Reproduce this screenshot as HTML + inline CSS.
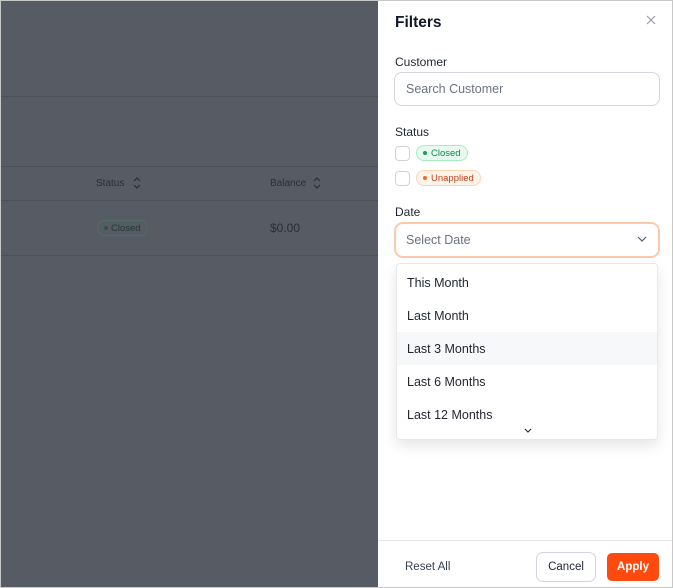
<!DOCTYPE html>
<html><head><style>
*{box-sizing:border-box;margin:0;padding:0}
body{width:673px;height:588px;overflow:hidden;font-family:"Liberation Sans",sans-serif;background:#fff;position:relative}
.frame{position:absolute;inset:0;border:1px solid #c8c8c8;z-index:10;pointer-events:none}
.ov{position:absolute;left:0;top:0;width:378px;height:588px;background:#575b63}
.ln{position:absolute;left:0;width:378px;height:1px;background:#4c5058}
.t{position:absolute;font-size:10px;color:#2a2e36}
.p{position:absolute;left:378px;top:0;width:295px;height:588px;background:#fff}
.a{position:absolute}
.lbl{font-size:12px;color:#1f2430}
.inp{border:1px solid #d3d6de;border-radius:8px;font-size:12.5px;color:#6b7280;padding-left:11px;display:flex;align-items:center}
.cb{width:15px;height:15px;border:1px solid #cfd3da;border-radius:4px}
.pill{height:16px;border-radius:8px;font-size:9.5px;display:flex;align-items:center;padding:0 6px}
.pill i{width:4px;height:4px;border-radius:2px;display:inline-block;margin-right:4px}
.it{position:absolute;left:0;width:262px;height:33px;font-size:12.5px;color:#1f2430;padding-left:10px;display:flex;align-items:center}
</style></head><body>
<div class="ov">
<div class="ln" style="top:96px"></div>
<div class="ln" style="top:166px"></div>
<div class="ln" style="top:200px"></div>
<div class="ln" style="top:255px"></div>
<div class="t" style="left:96px;top:178px">Status</div>
<svg class="a" style="left:132px;top:176px" width="10" height="14" viewBox="0 0 10 14"><path d="M2 5l3-3 3 3M2 9l3 3 3-3" fill="none" stroke="#2a2e36" stroke-width="1.2"/></svg>
<div class="t" style="left:270px;top:178px">Balance</div>
<svg class="a" style="left:312px;top:176px" width="10" height="14" viewBox="0 0 10 14"><path d="M2 5l3-3 3 3M2 9l3 3 3-3" fill="none" stroke="#2a2e36" stroke-width="1.2"/></svg>
<div class="a" style="left:97px;top:220px;width:51px;height:16px;border:1px solid #4f6f62;border-radius:8px;font-size:9.5px;color:#1f3a30;display:flex;align-items:center;padding-left:6px"><i style="width:4px;height:4px;border-radius:2px;background:#1f5a40;margin-right:3px;display:inline-block"></i>Closed</div>
<div class="t" style="left:270px;top:221px;font-size:12px">$0.00</div>
</div>
<div class="p">
<div class="a" style="left:17px;top:14px;font-size:15.5px;font-weight:bold;color:#111827">Filters</div>
<svg class="a" style="left:267px;top:14px" width="12" height="12" viewBox="0 0 12 12"><path d="M2 2l8 8M10 2l-8 8" stroke="#9aa0aa" stroke-width="1.2"/></svg>
<div class="a lbl" style="left:17px;top:55px">Customer</div>
<div class="a inp" style="left:16px;top:72px;width:266px;height:34px">Search Customer</div>
<div class="a lbl" style="left:17px;top:125px">Status</div>
<div class="a cb" style="left:17px;top:146px"></div>
<div class="a pill" style="left:38px;top:145px;background:#e8faf0;border:1px solid #a7ecc4;color:#0f8a4d"><i style="background:#14a05a"></i>Closed</div>
<div class="a cb" style="left:17px;top:171px"></div>
<div class="a pill" style="left:38px;top:170px;background:#fff3ea;border:1px solid #fbd5b5;color:#c0421b"><i style="background:#f26b2a"></i>Unapplied</div>
<div class="a lbl" style="left:17px;top:205px">Date</div>
<div class="a inp" style="left:16px;top:222px;width:266px;height:36px;border:2px solid #fdc9ad;border-radius:9px;padding-left:10px">Select Date</div>
<svg class="a" style="left:259px;top:236px" width="10" height="7" viewBox="0 0 10 7"><path d="M1 1l4 4 4-4" fill="none" stroke="#555b66" stroke-width="1.2"/></svg>
<div class="a" style="left:18px;top:263px;width:262px;height:177px;border:1px solid #e6e8ec;border-radius:4px;box-shadow:0 6px 14px rgba(0,0,0,.10);background:#fff;overflow:hidden">
<div class="it" style="top:2px">This Month</div>
<div class="it" style="top:35px">Last Month</div>
<div class="it" style="top:68px;background:#f7f8fa">Last 3 Months</div>
<div class="it" style="top:101px">Last 6 Months</div>
<div class="it" style="top:134px">Last 12 Months</div>
<svg class="a" style="left:127px;top:164px" width="8" height="6" viewBox="0 0 8 6"><path d="M1 1l3 3 3-3" fill="none" stroke="#333" stroke-width="1.2"/></svg>
</div>
<div class="a" style="left:0;top:540px;width:295px;height:1px;background:#e5e7eb"></div>
<div class="a" style="left:27px;top:561px;font-size:11.5px;color:#374151">Reset All</div>
<div class="a" style="left:158px;top:552px;width:60px;height:30px;border:1px solid #d1d5db;border-radius:7px;font-size:11.5px;color:#1f2430;display:flex;align-items:center;justify-content:center">Cancel</div>
<div class="a" style="left:229px;top:553px;width:52px;height:28px;background:#ff4a0f;border-radius:5px;font-size:11.5px;font-weight:bold;color:#fff;display:flex;align-items:center;justify-content:center">Apply</div>
</div>
<div class="frame"></div>
</body></html>
